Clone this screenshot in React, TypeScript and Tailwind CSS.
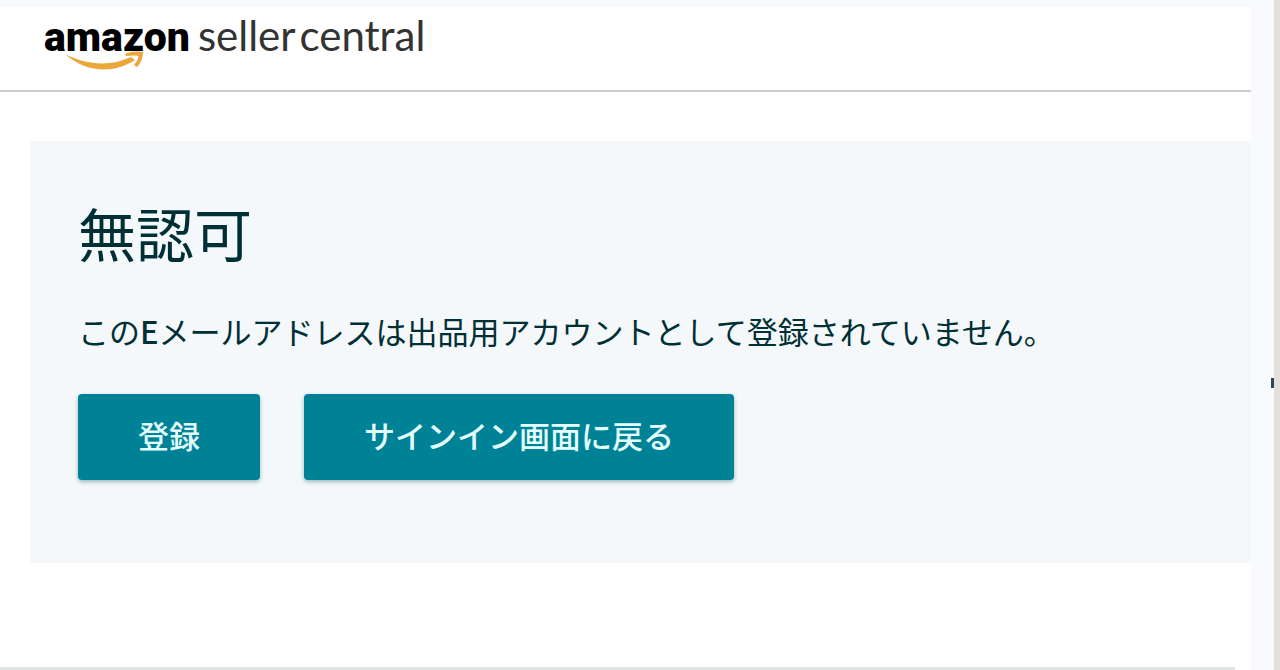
import type { ReactNode } from 'react';

function Logo() {
  return (
    <a href="#" aria-label="amazon seller central" className="flex w-fit items-baseline gap-2 whitespace-nowrap leading-10">
      <span className="relative font-[Roboto,sans-serif] text-[41px] font-black text-black">
        amazon
        <svg className="absolute left-5 top-[34px] h-5 w-20" viewBox="0 0 80 20" aria-hidden="true">
          <path d="M1 3C22 14 46 16 67 6L71 9C50 23 22 22 1 3Z" fill="#eba83a" />
          <path d="M61 3C66 0 75 0 79 1C79 6 77 12 73 16L70 14C73 10 75 7 74 5C71 4 66 5 62 5Z" fill="#eba83a" />
        </svg>
      </span>
      <span className="flex gap-1 font-[Lato,sans-serif] text-[42px] font-normal text-[#333333]">
        <span>seller</span>
        <span>central</span>
      </span>
    </a>
  );
}

function ActionButton({ children }: { children: ReactNode }) {
  return (
    <button
      type="button"
      className="h-[86px] rounded-sm bg-[#008296] px-[60px] pb-1 text-[31px] leading-10 font-medium text-[#e3ffff] shadow-[0_2px_4px_#9bb9c1]"
    >
      {children}
    </button>
  );
}

export default function App() {
  return (
    <div className="flex min-h-screen bg-[#f8fafb] font-['Noto_Sans_CJK_JP',sans-serif] text-[#002f36]">
      <div className="mt-[7px] flex min-w-0 flex-1 flex-col bg-white">
        <header className="h-[85px] border-b-2 border-[#cbcdce] pl-11 pt-2">
          <Logo />
        </header>
        <main className="ml-[30px] mt-[49px] bg-[#f4f8fa] pb-[83px] pl-12 pt-14">
          <h1 className="text-[58px] leading-[70px]">無認可</h1>
          <p className="mt-[42px] text-[31px] leading-[44px]">
            この<span className="font-medium">E</span>メールアドレスは出品用アカウントとして登録されていません。
          </p>
          <div className="mt-[41px] flex gap-11">
            <ActionButton>登録</ActionButton>
            <ActionButton>サインイン画面に戻る</ActionButton>
          </div>
        </main>
        <footer className="mr-4 mt-auto h-[3px] bg-[#dfe5e5]" />
      </div>
      <aside className="flex w-[29px] justify-end">
        <div className="mt-[378px] h-[10px] w-[3px] bg-[#29475f]" />
        <div className="w-[6px] bg-[#e2dfdd]" />
      </aside>
    </div>
  );
}
